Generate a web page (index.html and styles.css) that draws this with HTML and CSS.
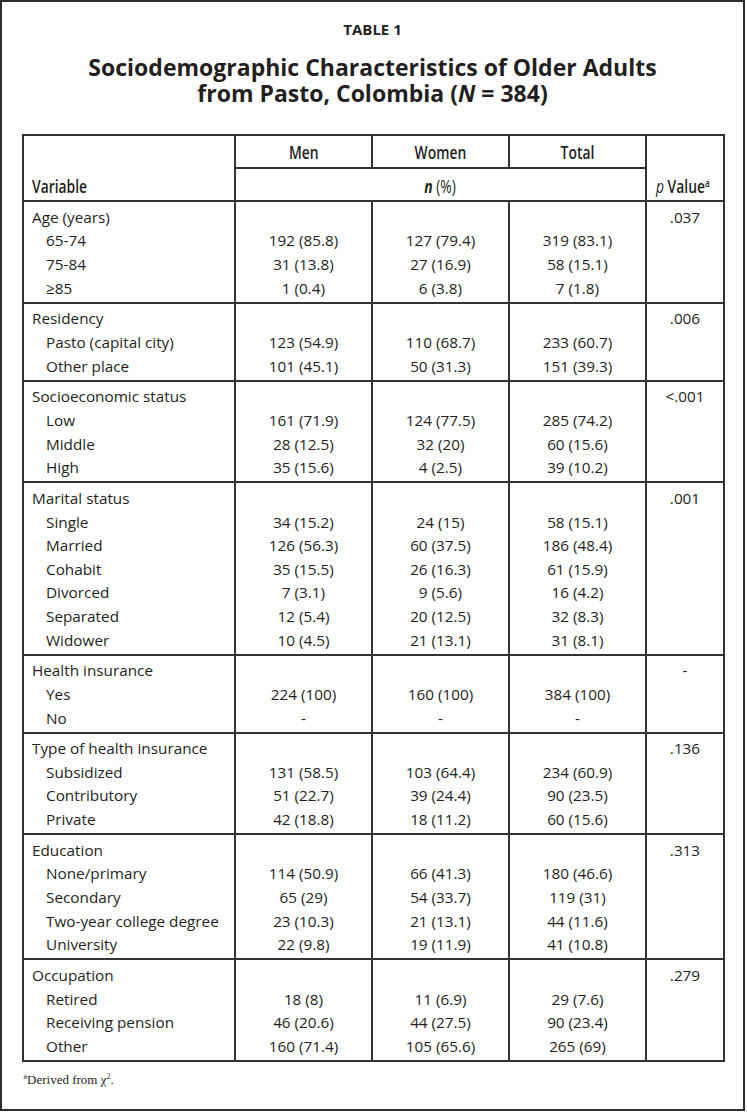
FILE: index.html
```html
<!DOCTYPE html>
<html lang="en">
<head>
<meta charset="utf-8">
<title>Table 1</title>
<link rel="stylesheet" href="styles.css">
</head>
<body>
<div class="frame">
  <p class="label">TABLE 1</p>
  <h1 class="title"><span class="tline">Sociodemographic Characteristics of Older Adults</span><span class="tline">from Pasto, Colombia (<i>N</i> = 384)</span></h1>
  <table class="data">
    <colgroup>
      <col class="c-var"><col class="c-num"><col class="c-num"><col class="c-num"><col class="c-p">
    </colgroup>
    <thead>
      <tr class="h1row">
        <th rowspan="2" class="h-var"><span class="cond left">Variable</span></th>
        <th class="h-mid"><span class="cond">Men</span></th>
        <th class="h-mid"><span class="cond">Women</span></th>
        <th class="h-mid"><span class="cond">Total</span></th>
        <th rowspan="2" class="h-p"><span class="cond"><i class="pi">p</i> Value<sup>a</sup></span></th>
      </tr>
      <tr class="h2row">
        <th colspan="3" class="h-n"><span class="cond"><b class="ni">n</b> <span class="reg">(%)</span></span></th>
      </tr>
    </thead>
    <tbody>
      <tr>
        <td class="var"><div>Age (years)</div><div class="sub">65-74</div><div class="sub">75-84</div><div class="sub">≥85</div></td>
        <td class="num"><div>192 (85.8)</div><div>31 (13.8)</div><div>1 (0.4)</div></td>
        <td class="num"><div>127 (79.4)</div><div>27 (16.9)</div><div>6 (3.8)</div></td>
        <td class="num"><div>319 (83.1)</div><div>58 (15.1)</div><div>7 (1.8)</div></td>
        <td class="p">.037</td>
      </tr>
      <tr>
        <td class="var"><div>Residency</div><div class="sub">Pasto (capital city)</div><div class="sub">Other place</div></td>
        <td class="num"><div>123 (54.9)</div><div>101 (45.1)</div></td>
        <td class="num"><div>110 (68.7)</div><div>50 (31.3)</div></td>
        <td class="num"><div>233 (60.7)</div><div>151 (39.3)</div></td>
        <td class="p">.006</td>
      </tr>
      <tr>
        <td class="var"><div>Socioeconomic status</div><div class="sub">Low</div><div class="sub">Middle</div><div class="sub">High</div></td>
        <td class="num"><div>161 (71.9)</div><div>28 (12.5)</div><div>35 (15.6)</div></td>
        <td class="num"><div>124 (77.5)</div><div>32 (20)</div><div>4 (2.5)</div></td>
        <td class="num"><div>285 (74.2)</div><div>60 (15.6)</div><div>39 (10.2)</div></td>
        <td class="p">&lt;.001</td>
      </tr>
      <tr>
        <td class="var"><div>Marital status</div><div class="sub">Single</div><div class="sub">Married</div><div class="sub">Cohabit</div><div class="sub">Divorced</div><div class="sub">Separated</div><div class="sub">Widower</div></td>
        <td class="num"><div>34 (15.2)</div><div>126 (56.3)</div><div>35 (15.5)</div><div>7 (3.1)</div><div>12 (5.4)</div><div>10 (4.5)</div></td>
        <td class="num"><div>24 (15)</div><div>60 (37.5)</div><div>26 (16.3)</div><div>9 (5.6)</div><div>20 (12.5)</div><div>21 (13.1)</div></td>
        <td class="num"><div>58 (15.1)</div><div>186 (48.4)</div><div>61 (15.9)</div><div>16 (4.2)</div><div>32 (8.3)</div><div>31 (8.1)</div></td>
        <td class="p">.001</td>
      </tr>
      <tr>
        <td class="var"><div>Health insurance</div><div class="sub">Yes</div><div class="sub">No</div></td>
        <td class="num"><div>224 (100)</div><div>-</div></td>
        <td class="num"><div>160 (100)</div><div>-</div></td>
        <td class="num"><div>384 (100)</div><div>-</div></td>
        <td class="p">-</td>
      </tr>
      <tr>
        <td class="var"><div>Type of health insurance</div><div class="sub">Subsidized</div><div class="sub">Contributory</div><div class="sub">Private</div></td>
        <td class="num"><div>131 (58.5)</div><div>51 (22.7)</div><div>42 (18.8)</div></td>
        <td class="num"><div>103 (64.4)</div><div>39 (24.4)</div><div>18 (11.2)</div></td>
        <td class="num"><div>234 (60.9)</div><div>90 (23.5)</div><div>60 (15.6)</div></td>
        <td class="p">.136</td>
      </tr>
      <tr>
        <td class="var"><div>Education</div><div class="sub">None/primary</div><div class="sub">Secondary</div><div class="sub">Two-year college degree</div><div class="sub">University</div></td>
        <td class="num"><div>114 (50.9)</div><div>65 (29)</div><div>23 (10.3)</div><div>22 (9.8)</div></td>
        <td class="num"><div>66 (41.3)</div><div>54 (33.7)</div><div>21 (13.1)</div><div>19 (11.9)</div></td>
        <td class="num"><div>180 (46.6)</div><div>119 (31)</div><div>44 (11.6)</div><div>41 (10.8)</div></td>
        <td class="p">.313</td>
      </tr>
      <tr>
        <td class="var"><div>Occupation</div><div class="sub">Retired</div><div class="sub">Receiving pension</div><div class="sub">Other</div></td>
        <td class="num"><div>18 (8)</div><div>46 (20.6)</div><div>160 (71.4)</div></td>
        <td class="num"><div>11 (6.9)</div><div>44 (27.5)</div><div>105 (65.6)</div></td>
        <td class="num"><div>29 (7.6)</div><div>90 (23.4)</div><div>265 (69)</div></td>
        <td class="p">.279</td>
      </tr>
    </tbody>
  </table>
  <p class="note"><sup>a</sup>Derived from χ<sup>2</sup>.</p>
</div>
</body>
</html>
```
FILE: styles.css
```css
* { box-sizing: border-box; }
html, body { margin: 0; padding: 0; background: #ffffff; }
body {
  font-family: "Open Sans", "DejaVu Sans", sans-serif;
  color: #231f20;
}
.frame {
  width: 745px;
  height: 1111px;
  border: 2px solid #2d2d2d;
  padding: 17px 0 0 0;
}
.label {
  margin: 0;
  text-align: center;
  font-weight: 700;
  font-size: 15px;
  line-height: 20px;
}
.title {
  margin: 14.8px 0 0 0;
  text-align: center;
  font-weight: 700;
  font-size: 23px;
  line-height: 26px;
}
.tline { display: block; }
.title i { font-style: italic; }

.data {
  margin: 28.5px 0 0 20px;
  width: 703px;
  table-layout: fixed;
  border-collapse: separate;
  border-spacing: 0;
  border-top: 2px solid #333;
  border-left: 2px solid #333;
}
.c-var { width: 212px; }
.c-num { width: 137px; }
.c-p { width: 78px; }

.data th, .data td {
  border-right: 2px solid #333;
  border-bottom: 2px solid #333;
  padding: 0;
}
.data th {
  font-weight: 600;
  font-size: 18.5px;
  line-height: 29px;
  text-align: center;
}
.cond {
  display: inline-block;
  transform: scaleX(0.75);
  transform-origin: center;
  white-space: nowrap;
}
.cond.left { transform-origin: left; }
.h1row th { padding: 1px 0; }
.h2row th { padding: 2px 0 0 0; }
.data th.h-var {
  text-align: left;
  vertical-align: bottom;
  padding: 0 0 0 8px;
}
.data th.h-p {
  vertical-align: bottom;
  padding: 0 4px 0 0;
}
.pi { font-weight: 400; font-style: italic; }
.ni { font-weight: 700; font-style: italic; }
.reg { font-weight: 400; }
.h-p sup {
  font-size: 11px;
  line-height: 0;
  vertical-align: 6px;
  font-weight: 600;
}

.data td {
  vertical-align: top;
  font-size: 15.3px;
  line-height: 23.6px;
  padding: 3.6px 0 1.6px 0;
}
.data td.var { padding-left: 8px; }
.data td.var .sub { padding-left: 14px; }
.data td.num {
  text-align: center;
  padding-top: 27.2px;
}
.data td.p { text-align: center; }

.note {
  margin: 10px 0 0 21.5px;
  font-family: "Liberation Serif", "Times New Roman", serif;
  font-size: 13px;
  line-height: 16px;
}
.note sup {
  font-size: 8px;
  line-height: 0;
  vertical-align: 5px;
}
```
